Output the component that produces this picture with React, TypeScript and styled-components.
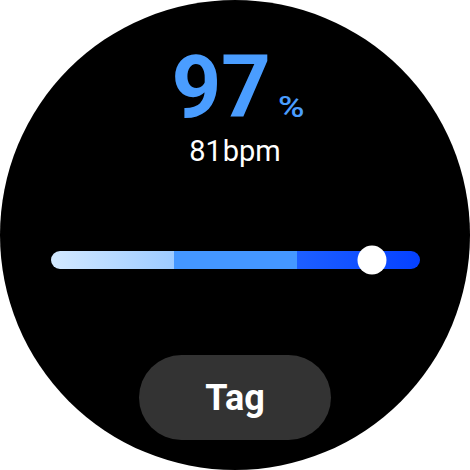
import React from "react";
import styled, { createGlobalStyle } from "styled-components";

const GlobalStyle = createGlobalStyle`
  html, body {
    margin: 0;
    padding: 0;
    background: #fff;
  }
  body {
    font-family: Roboto, "Liberation Sans", sans-serif;
  }
`;

const Watch = styled.div`
  width: 470px;
  height: 470px;
  border-radius: 50%;
  background: #000;
  display: flex;
  flex-direction: column;
  align-items: center;
  padding-top: 44px;
  box-sizing: border-box;
  overflow: hidden;
`;

const ValueRow = styled.div`
  display: flex;
  align-items: baseline;
  color: #4a9dff;
  line-height: 1;
  margin-left: 2px;
`;

const BigValue = styled.span`
  font-size: 87px;
  font-weight: 700;
  letter-spacing: -0.5px;
`;

const Unit = styled.span`
  font-size: 30px;
  font-weight: 500;
  margin-left: 8px;
  transform: scaleX(1.2);
  transform-origin: left bottom;
`;

const Pulse = styled.div`
  margin-top: 6px;
  color: #fff;
  font-size: 29px;
  line-height: 1;
  display: flex;
  gap: 1px;
`;

const Track = styled.div`
  position: relative;
  margin-top: 85px;
  width: 369px;
  height: 18px;
  border-radius: 9px;
  display: flex;
`;

const Segment = styled.div<{ $bg: string; $first?: boolean; $last?: boolean }>`
  flex: 1;
  background: ${(p) => p.$bg};
  border-radius: ${(p) =>
    p.$first ? "9px 0 0 9px" : p.$last ? "0 9px 9px 0" : "0"};
`;

const Thumb = styled.div`
  position: absolute;
  width: 29px;
  height: 29px;
  border-radius: 50%;
  background: #fff;
  top: 50%;
  transform: translate(-50%, -50%);
`;

const TagButton = styled.button`
  margin-top: 86px;
  width: 192px;
  height: 85px;
  border: none;
  border-radius: 43px;
  background: #333333;
  color: #fff;
  font-family: Roboto, "Liberation Sans", sans-serif;
  font-size: 36px;
  font-weight: 700;
  display: flex;
  align-items: center;
  justify-content: center;
  padding: 0;
`;

const segments = [
  "linear-gradient(90deg, #d3e9ff 0%, #9dcbff 100%)",
  "#4497ff",
  "linear-gradient(90deg, #1d5fff 0%, #0541ff 100%)",
];

export default function App() {
  const position = 0.87; // thumb position 0..1

  return (
    <>
      <GlobalStyle />
      <Watch>
        <ValueRow>
          <BigValue>97</BigValue>
          <Unit>%</Unit>
        </ValueRow>
        <Pulse>
          <span>81</span>
          <span>bpm</span>
        </Pulse>
        <Track>
          {segments.map((bg, i) => (
            <Segment
              key={i}
              $bg={bg}
              $first={i === 0}
              $last={i === segments.length - 1}
            />
          ))}
          <Thumb style={{ left: `${position * 100}%` }} />
        </Track>
        <TagButton>Tag</TagButton>
      </Watch>
    </>
  );
}
